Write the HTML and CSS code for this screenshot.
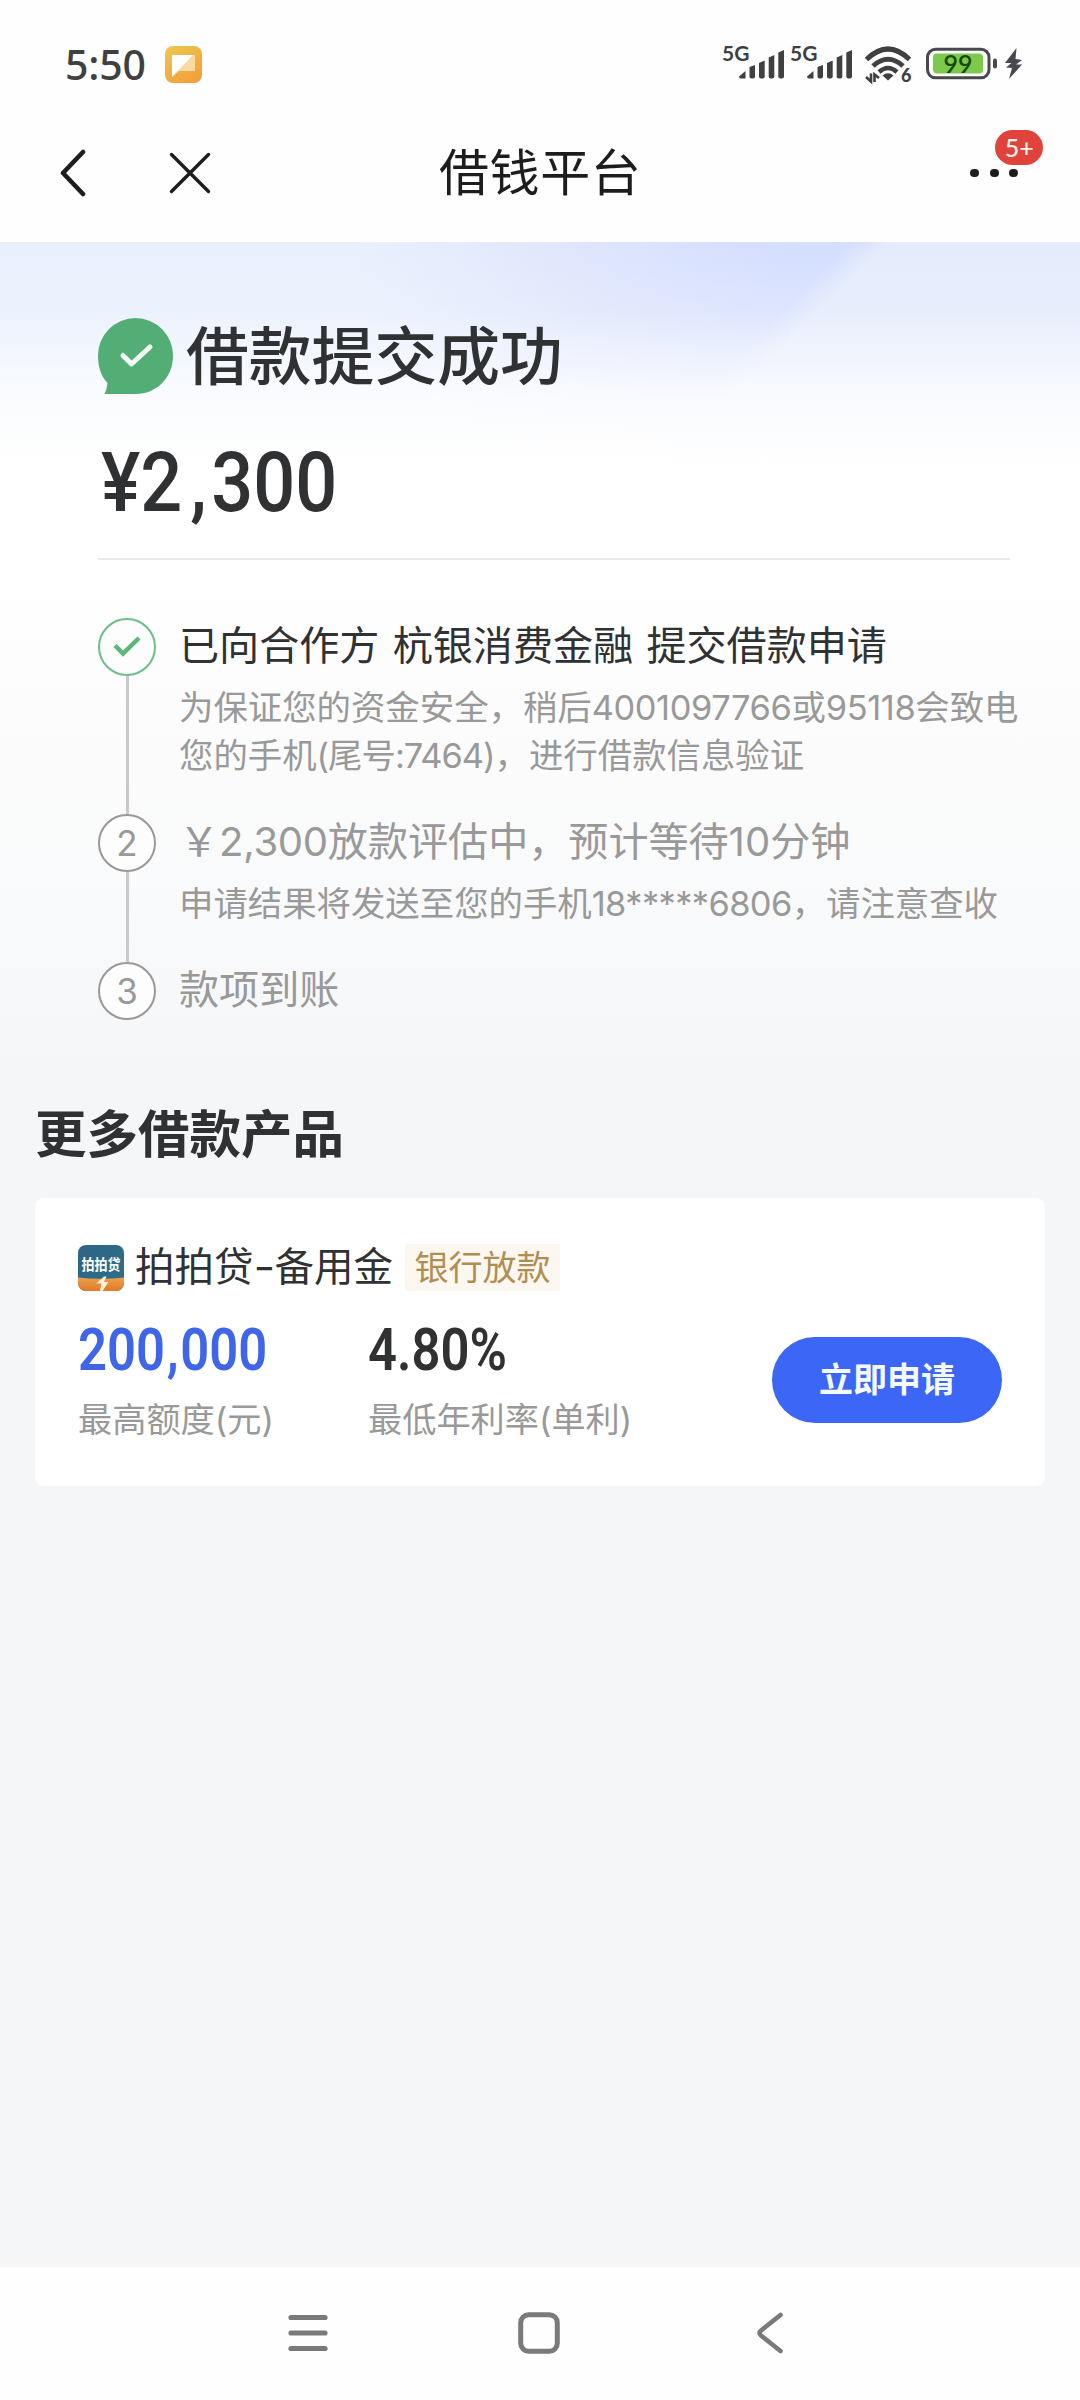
FILE: index.html
```html
<!DOCTYPE html>
<html lang="zh-CN">
<head>
<meta charset="utf-8">
<title>借钱平台</title>
<link rel="stylesheet" href="styles.css">
</head>
<body>
<div class="screen">
  <header class="top">
    <div class="status">
      <span class="clock">5:50</span>
      <svg class="note-icon" width="37" height="37" viewBox="0 0 37 37">
        <defs><linearGradient id="note" x1="0" y1="0" x2="0.6" y2="1"><stop offset="0" stop-color="#ecc94f"/><stop offset="1" stop-color="#f2a13a"/></linearGradient></defs>
        <rect width="37" height="37" rx="8" fill="url(#note)"/>
        <path d="M7 9H30V25H14L7 31Z" fill="#fbd9a0"/>
        <path d="M7 9H28L7 31Z" fill="#fff"/>
      </svg>
      <div class="status-right">
        <svg width="304" height="60" viewBox="718 34 304 60">
          <g fill="#404040">
            <g id="signal">
              <text class="net" x="722" y="60.500">5G</text>
              <path d="M739 76.500L745.500 71V78.500H741Q739 78.500 739 76.500Z"/>
              <path d="M749.500 67L755 65V76.500Q755 78.500 753 78.500H751.500Q749.500 78.500 749.500 76.500Z"/>
              <path d="M759 63L764.700 60.500V76.500Q764.700 78.500 762.700 78.500H761Q759 78.500 759 76.500Z"/>
              <path d="M768.700 57.500L774.300 55V76.500Q774.300 78.500 772.300 78.500H770.700Q768.700 78.500 768.700 76.500Z"/>
              <path d="M778.300 52.500L784 50V76.500Q784 78.500 782 78.500H780.300Q778.300 78.500 778.300 76.500Z"/>
            </g>
            <use href="#signal" x="68"/>
            <path d="M888 80.500L882.500 75.500Q888 71 893.500 75.500Z"/>
            <path d="M871 73.500V81.500L866 77M874.500 82V74.500L879 78" fill="none" stroke="#404040" stroke-width="2.600"/>
            <text class="six" x="901" y="82">6</text>
          </g>
          <g fill="none" stroke="#404040" stroke-width="5">
            <path d="M866.500 59.500Q888 38.500 909.500 59.500"/>
            <path d="M873 66Q888 52.500 903 66"/>
            <path d="M879 72Q888 64 897 72" stroke-width="4.500"/>
          </g>
          <rect x="927.500" y="49.300" width="61.500" height="28.500" rx="8" fill="#fff" stroke="#48494f" stroke-width="3"/>
          <rect x="933" y="53.500" width="50" height="20" rx="4" fill="#7cc94b"/>
          <text class="level" x="958" y="72.500">99</text>
          <rect x="993" y="58.500" width="4" height="10" rx="2" fill="#48494f"/>
          <path d="M1016.500 48L1005 63H1011.500L1006 67.500L1012 68L1009 79L1022 64.500H1016L1022 60L1015.500 59Z" fill="#48494f"/>
        </svg>
      </div>
    </div>
    <nav class="titlebar">
      <svg class="back" width="26" height="48" viewBox="0 0 26 48"><path d="M23 3L3 24L23 45" fill="none" stroke="#1d1d1d" stroke-width="4.600" stroke-linecap="round" stroke-linejoin="round"/></svg>
      <svg class="close" width="42" height="42" viewBox="0 0 42 42"><path d="M2.500 2.500L39.500 39.500M39.500 2.500L2.500 39.500" stroke="#1d1d1d" stroke-width="3.400" stroke-linecap="round"/></svg>
      <h1>借钱平台</h1>
      <div class="more">
        <i></i><i></i><i></i>
        <span class="badge">5+</span>
      </div>
    </nav>
  </header>

  <main>
    <section class="result">
      <div class="result-title">
        <svg width="75" height="76" viewBox="0 0 75 76">
          <path d="M37.500 0A37.500 37.500 0 0 1 75 38C75 60 58 76 38 76H6.500Q9 71 9.500 65C3 58 0 49 0 38A37.500 37.500 0 0 1 37.500 0Z" fill="#53ae76"/>
          <path d="M25 37.500L33.500 46L52 29" fill="none" stroke="#f4fff6" stroke-width="5" stroke-linecap="round" stroke-linejoin="round"/>
        </svg>
        <h2>借款提交成功</h2>
      </div>
      <div class="amount"><span>¥2<b class="comma">,</b>300</span></div>
    </section>

    <ol class="steps">
      <li class="step done">
        <div class="rail"><span class="dot"><svg width="30" height="24" viewBox="0 0 30 24"><path d="M3 10.500L11 18.500L27 3" fill="none" stroke="#5db67c" stroke-width="4.500"/></svg></span></div>
        <div class="body">
          <h3>已向合作方 杭银消费金融 提交借款申请</h3>
          <p>为保证您的资金安全，稍后<span class="phone">4001097766</span>或<span class="phone">95118</span>会致电<br>您的手机<span class="tail">(尾号:7464)</span>，进行借款信息验证</p>
        </div>
      </li>
      <li class="step second">
        <div class="rail"><span class="dot">2</span></div>
        <div class="body">
          <h3>￥<span class="sum">2,300</span>放款评估中，预计等待10分钟</h3>
          <p>申请结果将发送至您的手机<span class="mobile">18*****6806</span>，请注意查收</p>
        </div>
      </li>
      <li class="step last">
        <div class="rail"><span class="dot">3</span></div>
        <div class="body"><h3>款项到账</h3></div>
      </li>
    </ol>

    <h2 class="section-title">更多借款产品</h2>
    <article class="card">
      <div class="product">
        <svg class="logo" width="46" height="46" viewBox="0 0 46 46">
          <defs>
            <linearGradient id="sea" x1="0" y1="0" x2="1" y2="1"><stop offset="0" stop-color="#2f6384"/><stop offset="1" stop-color="#2b7288"/></linearGradient>
            <linearGradient id="sun" x1="0" y1="0" x2="0" y2="1"><stop offset="0" stop-color="#eea04a"/><stop offset="1" stop-color="#df7a2b"/></linearGradient>
            <clipPath id="tile"><rect width="46" height="46" rx="8"/></clipPath>
          </defs>
          <g clip-path="url(#tile)">
            <rect width="46" height="46" fill="url(#sea)"/>
            <path d="M0 32.500Q23 35 46 32.500V46H0Z" fill="url(#sun)"/>
            <path d="M26 31.500L18.500 38.500H23.500L22 46H24.500L30.500 37H26L28.500 31.500Z" fill="#fff2d8"/>
            <text transform="translate(23 25) scale(.93 1.080)">拍拍贷</text>
          </g>
        </svg>
        <span class="name">拍拍贷<span class="dash">-</span>备用金</span>
        <span class="tag">银行放款</span>
      </div>
      <div class="offer">
        <div class="metric quota">
          <div class="value"><span>200<b class="comma">,</b>000</span></div>
          <div class="label">最高额度(元)</div>
        </div>
        <div class="metric rate">
          <div class="value"><span>4.80%</span></div>
          <div class="label">最低年利率(单利)</div>
        </div>
        <button class="apply">立即申请</button>
      </div>
    </article>
  </main>

  <footer class="navbar">
    <svg width="40" height="42" viewBox="0 0 40 42"><path d="M3 5.500H37M3 21H37M3 36.500H37" stroke="#7a7a7a" stroke-width="5.200" stroke-linecap="round"/></svg>
    <svg class="home" width="42" height="42" viewBox="0 0 42 42"><rect x="2.700" y="2.700" width="36.600" height="36.600" rx="8" fill="none" stroke="#7a7a7a" stroke-width="5"/></svg>
    <svg width="28" height="42" viewBox="0 0 28 42"><path d="M24.500 3L5 18.500Q2 21 5 23.500L24.500 39" fill="none" stroke="#7a7a7a" stroke-width="4.600" stroke-linecap="round"/></svg>
  </footer>
</div>
</body>
</html>
```
FILE: styles.css
```css
* { box-sizing: border-box; margin: 0; padding: 0; }

body {
  width: 1080px;
  font-family: Inter, "Noto Sans CJK SC", sans-serif;
  color: #303133;
  background: #f4f6f8;
}

svg { display: block; flex: none; }

.screen { display: flex; flex-direction: column; height: 2400px; }

/* status bar and title bar */
.top { height: 242px; background: #fefefe; }
.status { display: flex; align-items: center; height: 84px; padding: 44px 58px 0 65px; }
.clock { width: 100px; font-family: "Noto Sans", sans-serif; font-size: 41px; line-height: 40px; font-weight: 500; letter-spacing: -.2px; color: #404040; }
.status-right { margin-left: auto; }
.net { font: 700 21px Lato, sans-serif; }
.six { font: 900 18px Lato, sans-serif; }
.level { font: 600 25px Lato, sans-serif; fill: #164a09; text-anchor: middle; }

.titlebar { display: flex; align-items: center; height: 88px; margin-top: 45px; padding: 0 60px; }
.close { margin-left: 83px; }
.titlebar h1 { margin-left: 228px; font-size: 50px; line-height: 80px; font-weight: 400; letter-spacing: .6px; color: #1d1d1d; }
.more { position: relative; display: flex; gap: 10.700px; margin-left: auto; margin-right: 2px; }
.more i { width: 8.800px; height: 8.800px; border-radius: 50%; background: #1d1d1d; }
.badge {
  position: absolute; left: 25px; top: -39px; width: 48px; height: 35px;
  border-radius: 18px; background: #e0433b; color: #fff4e8;
  font: 500 25px/35px Lato, sans-serif; text-align: center;
}

main {
  flex: 1;
  padding: 0 35px;
  background:
    linear-gradient(180deg, rgba(255,255,255,0) 0, rgba(255,255,255,.15) 70px, rgba(255,255,255,.8) 160px, #fff 225px, #fff 330px, #fcfcfc 480px, #f9fafb 650px, #f4f6f8 840px),
    linear-gradient(135deg, rgba(228,236,252,0) 35%, #e4ebfc 40%) 600px 0 / 480px 240px no-repeat,
    radial-gradient(ellipse 460px 260px at 810px 10px, #d4defe 0, #d8e1fe 25%, rgba(223,230,252,.8) 60%, rgba(232,239,252,0) 100%),
    #e9f0fd;
}

/* result summary */
.result { height: 318px; margin: 0 35px 0 63px; padding-top: 76px; border-bottom: 2px solid #e9eaeb; }
.result-title { display: flex; align-items: center; gap: 13px; height: 76px; }
.result-title h2 { font-size: 62.800px; line-height: 76px; font-weight: 500; }
.amount { margin-top: 49px; height: 80px; line-height: 80px; font-family: Roboto, sans-serif; font-size: 84px; font-weight: 500; }
.amount span { display: inline-block; transform: scaleX(.88); transform-origin: 0 50%; margin-left: 3px; }
.comma { font-weight: inherit; }
.amount .comma { margin: 0 5px 0 9px; }

/* progress steps */
.steps { list-style: none; margin: 58px 0 0 63px; }
.step { display: flex; gap: 23px; height: 196px; }
.step.second { height: 148px; }
.step.last { height: 58px; }
.rail { display: flex; flex-direction: column; align-items: center; width: 58px; }
.rail::after { content: ""; flex: 1; width: 3px; background: #c9c9c9; }
.last .rail::after { display: none; }
.dot {
  display: flex; align-items: center; justify-content: center;
  width: 58px; height: 58px; border: 2px solid #999; border-radius: 50%;
  background: #fdfdfe; color: #999; font-size: 35px;
}
.done .dot { border-color: #6dbe88; border-width: 2.500px; }
.body { white-space: nowrap; color: #999; }
.body h3 { font-size: 40.100px; line-height: 56px; font-weight: 400; }
.done h3 { color: #303133; word-spacing: 2px; }
.body p { margin-top: 10px; font-size: 34.400px; line-height: 48px; }
.phone { letter-spacing: -.4px; }
.tail { letter-spacing: -1px; }
.mobile { letter-spacing: -.6px; }
.sum { letter-spacing: -.3px; }

/* product list */
.section-title { margin-top: 76px; font-size: 51.500px; line-height: 76px; font-weight: 700; }
.card { height: 288px; margin-top: 26px; padding: 46px 43px 0; border-radius: 9px; background: #fff; }
.product { display: flex; align-items: center; height: 47px; white-space: nowrap; }
.name { width: 270px; margin-left: 11px; font-size: 39.500px; line-height: 47px; }
.dash { display: inline-block; width: 21px; text-align: center; transform: scaleX(1.2); }
.tag { width: 155px; height: 47px; background: #fcf7f1; color: #b18e50; font-size: 34px; line-height: 47px; text-align: center; }
.logo text { font: 700 14px "Noto Sans CJK SC", sans-serif; fill: #fff; text-anchor: middle; }

.offer { display: flex; padding-top: 30px; }
.metric { white-space: nowrap; }
.quota { width: 290px; }
.quota .value { color: #3f66e8; }
.value { height: 56px; font-family: Roboto, sans-serif; font-size: 59px; line-height: 58px; font-weight: 600; }
.value span { display: inline-block; transform: scaleX(.86); transform-origin: 0 50%; }
.value .comma { margin: 0 2px; }
.label { margin-top: 19px; font-size: 34.200px; line-height: 48px; color: #999; }
.apply {
  width: 230px; height: 86px; margin: 16px 0 0 auto; border: 0; border-radius: 43px;
  background: #3c66f6; color: #f4fbff; font: 700 34px/86px Inter, "Noto Sans CJK SC", sans-serif;
}

/* system navigation */
.navbar { display: flex; height: 133px; padding: 45px 288px 0; background: #fefefe; }
.home { margin: 0 196px 0 190px; }
```
